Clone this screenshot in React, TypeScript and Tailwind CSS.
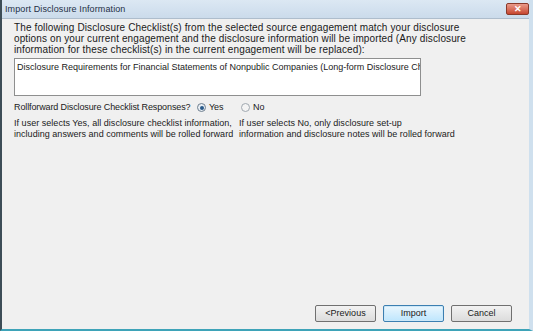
import React from "react";

export default function App() {
  return (
    <div
      className="w-[533px] h-[331px] flex flex-col bg-[#f0f0f0] overflow-hidden border-l-2 border-l-[#3d4d57] border-b-2 border-b-[#3ea3b8] border-r-[4px] border-r-[#cfe0ee]"
      style={{ fontFamily: '"Liberation Sans", Arial, sans-serif' }}
    >
      {/* Title bar */}
      <div className="h-[19px] flex items-center justify-between bg-gradient-to-b from-[#dce8f3] to-[#cbdbeb] border-b border-b-[#aebdcc] pl-[3px] pr-0">
        <span className="text-[9px] text-[#1e2f45] leading-none tracking-[0.1px]">Import Disclosure Information</span>
        <div className="w-[23px] h-[12px] rounded-[2px] bg-gradient-to-b from-[#e99a8a] to-[#c6452e] border border-[#8a3a2a] flex items-center justify-center">
          <span className="text-white text-[9px] font-bold leading-none">✕</span>
        </div>
      </div>

      {/* Body */}
      <div className="flex-1 flex flex-col pl-[12px] pr-[14px] pt-[3px] text-[10px] text-[#1a1a1a] leading-[11px]">
        <div className="whitespace-nowrap tracking-[0.12px]">
          <div>The following Disclosure Checklist(s) from the selected source engagement match your disclosure</div>
          <div>options on your current engagement and the disclosure information will be imported (Any disclosure</div>
          <div>information for these checklist(s) in the current engagement will be replaced):</div>
        </div>
        <div className="mt-[3px] w-[407px] h-[38px] bg-white border border-[#8e8f8f] px-[2px] pt-[3px] overflow-hidden whitespace-nowrap text-[9px] tracking-[0px]">
          Disclosure Requirements for Financial Statements of Nonpublic Companies (Long-form Disclosure Checklist)
        </div>

        <div className="mt-[5px] flex items-center h-[13px] text-[9px] tracking-[-0.12px]">
          <span className="w-[183px] whitespace-nowrap">Rollforward Disclosure Checklist Responses?</span>
          <span className="w-[9px] h-[9px] rounded-full border border-[#6f7f8f] bg-[#e8eef4] flex items-center justify-center">
            <span className="w-[4px] h-[4px] rounded-full bg-[#2a5a8a]" />
          </span>
          <span className="ml-[3px] w-[32px]">Yes</span>
          <span className="w-[9px] h-[9px] rounded-full border border-[#a0a8b0] bg-[#f4f4f4]" />
          <span className="ml-[3px]">No</span>
        </div>

        <div className="mt-[4px] flex text-[9px] tracking-[0.03px] whitespace-nowrap">
          <div className="w-[225px]">
            <div>If user selects Yes, all disclosure checklist information,</div>
            <div>including answers and comments will be rolled forward</div>
          </div>
          <div>
            <div>If user selects No, only disclosure set-up</div>
            <div>information and disclosure notes will be rolled forward</div>
          </div>
        </div>

        <div className="flex-1" />

        <div className="flex justify-end gap-[7px] pb-[7px] pr-[3px]">
          <button className="w-[61px] h-[17px] rounded-[2px] border border-[#707070] bg-gradient-to-b from-[#f2f2f2] to-[#dcdcdc] text-[9px] leading-none text-[#1a1a1a]">
            &lt;Previous
          </button>
          <button className="w-[61px] h-[17px] rounded-[2px] border border-[#3c7fb1] bg-gradient-to-b from-[#eaf6fd] to-[#bee6fd] text-[9px] leading-none text-[#1a1a1a] shadow-[inset_0_0_0_1px_#cde8f8]">
            Import
          </button>
          <button className="w-[61px] h-[17px] rounded-[2px] border border-[#707070] bg-gradient-to-b from-[#f2f2f2] to-[#dcdcdc] text-[9px] leading-none text-[#1a1a1a]">
            Cancel
          </button>
        </div>
      </div>
    </div>
  );
}
